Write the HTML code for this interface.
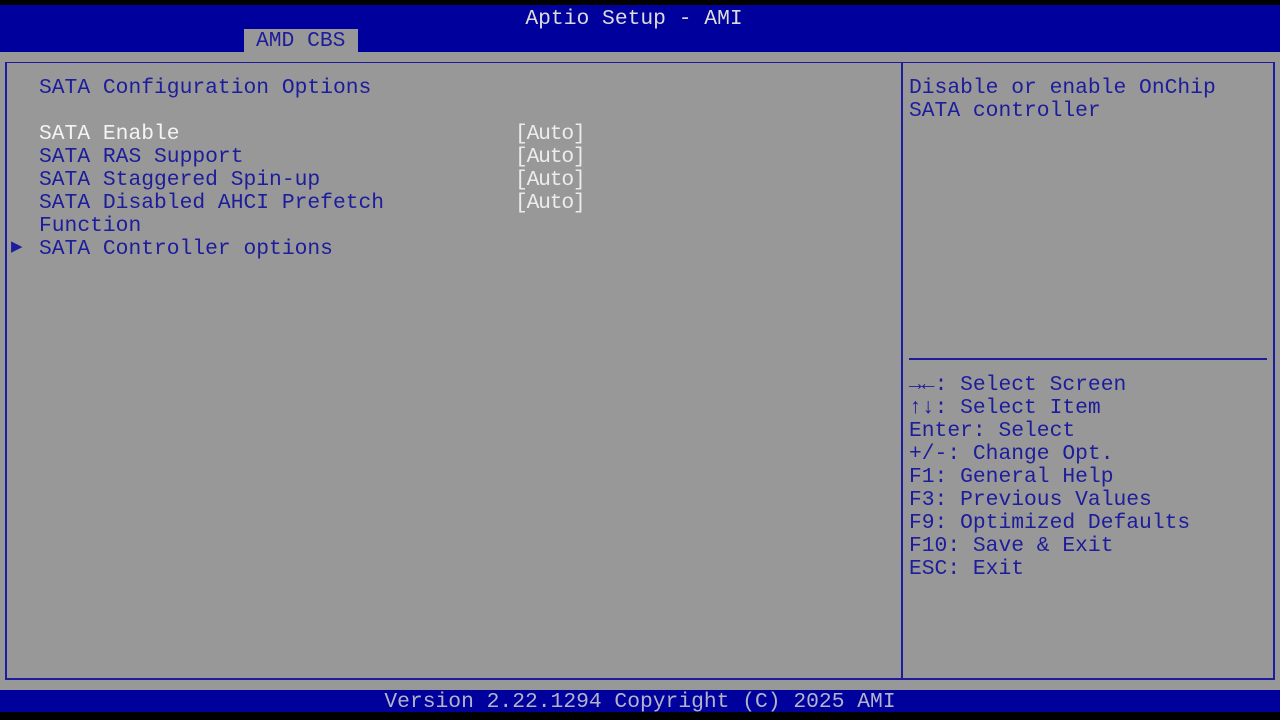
<!DOCTYPE html>
<html><head><style>
body{margin:0;width:1280px;height:720px;background:#989898;position:relative;overflow:hidden;font-family:"Liberation Mono",monospace;font-size:21.3px;}
div{position:absolute;}
.t{white-space:pre;line-height:23px;}
.b{color:#1c1c9c}
.w{color:#f4f4f4}
</style></head><body>
<div style="left:0;top:0;width:1280px;height:5px;background:#000"></div>
<div style="left:0;top:5px;width:1280px;height:47px;background:#00009c"></div>
<div class="t" style="left:0;top:8px;width:1268px;text-align:center;color:#dcdcdc">Aptio Setup - AMI</div>
<div style="left:244px;top:29px;width:114px;height:23px;background:#989898"></div>
<div class="t b" style="left:256px;top:30px">AMD CBS</div>
<div style="left:5px;top:62px;width:1266px;height:615px;border:1px solid #1c1c9c;border-left-width:2px;border-right-width:2px;border-bottom-width:2px"></div>
<div style="left:901px;top:62px;width:2px;height:617px;background:#1c1c9c"></div>
<div style="left:909px;top:358px;width:358px;height:2px;background:#1c1c9c"></div>
<div class="t b" style="left:39px;top:77px">SATA Configuration Options</div>
<div class="t w" style="left:39px;top:123px">SATA Enable</div>
<div class="t b" style="left:39px;top:146px">SATA RAS Support
SATA Staggered Spin-up
SATA Disabled AHCI Prefetch
Function
SATA Controller options</div>
<div class="t b" style="left:11px;top:236px;font-size:19px">&#9654;</div>
<div class="t w" style="left:515px;top:123px;color:#ececec;letter-spacing:-1.2px">[Auto]
[Auto]
[Auto]
[Auto]</div>
<div class="t b" style="left:909px;top:77px">Disable or enable OnChip
SATA controller</div>
<div class="t b" style="left:909px;top:374px"><b>&#8594;&#8592;</b>: Select Screen
<b>&#8593;&#8595;</b>: Select Item
Enter: Select
+/-: Change Opt.
F1: General Help
F3: Previous Values
F9: Optimized Defaults
F10: Save &amp; Exit
ESC: Exit</div>
<div style="left:0;top:690px;width:1280px;height:22px;background:#00009c"></div>
<div class="t" style="left:0;top:691px;width:1280px;text-align:center;color:#b4b4c8;line-height:23px">Version 2.22.1294 Copyright (C) 2025 AMI</div>
<div style="left:0;top:712px;width:1280px;height:8px;background:#000"></div>
</body></html>
